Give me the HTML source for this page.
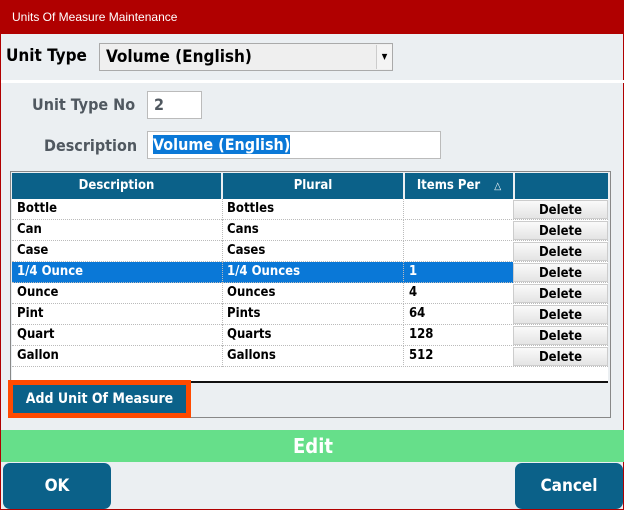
<!DOCTYPE html>
<html><head><style>
*{box-sizing:border-box;margin:0;padding:0}
body{width:624px;height:510px;background:#ebeff2;font-family:"DejaVu Sans Condensed","Liberation Sans",sans-serif;position:relative;overflow:hidden;border:1px solid #b00000}
.abs{position:absolute}
.title{left:0;top:0;width:624px;height:33px;background:#b00000;color:#fff;font-size:12px;line-height:33px;padding-left:11px;font-family:"Liberation Sans",sans-serif}
b,.b{font-weight:bold}
.lbl{font-size:16px;font-weight:bold;color:#505860}
.row{position:absolute;left:11px;width:596px;height:21px;font-size:13px;font-weight:bold;background:#fff;border-bottom:1px dotted #bbb}
.row span{position:absolute;top:2px}
.row .c1{left:5px}.row .c2{left:215px}.row .c3{left:397px}
.row .del{position:absolute;left:501px;top:1px;width:95px;height:19px;background:linear-gradient(#fafafa,#e4e4e4);border:1px solid #ccc;text-align:center;font-size:13px;line-height:19px;color:#000}
.sel{background:#0a78d7;color:#fff}
.sep{position:absolute;top:0;height:21px;border-left:1px dotted #bbb}
.hdr{position:absolute;top:172px;height:26px;background:#0b6189;color:#fff;font-size:13px;font-weight:bold;text-align:center;line-height:26px;border-right:2px solid #ebeff2}
.btn{background:#0b6189;color:#fff;font-weight:bold;font-size:17px;text-align:center;border-radius:7px}
</style></head><body>
<div class="abs title">Units Of Measure Maintenance</div>
<div class="abs b" style="left:5px;top:45px;font-size:17px;color:#000">Unit Type</div>
<div class="abs" style="left:98px;top:42px;width:294px;height:28px;background:#efefef;border:1px solid #aaa;font-size:17px;font-weight:bold;line-height:26px;padding-left:6px">Volume (English)</div>
<div class="abs" style="left:375px;top:44px;width:16px;height:24px;background:#f4f4f4;border-left:1px solid #ccc;font-size:8px;text-align:center;line-height:24px">▼</div>
<div class="abs" style="left:0;top:79px;width:624px;height:3px;background:#fff"></div>
<div class="abs lbl" style="left:31px;top:94px">Unit Type No</div>
<div class="abs" style="left:146px;top:90px;width:55px;height:28px;background:#fff;border:1px solid #bbb;font-size:16px;font-weight:bold;color:#505860;line-height:26px;padding-left:6px">2</div>
<div class="abs lbl" style="left:43px;top:135px">Description</div>
<div class="abs" style="left:146px;top:130px;width:294px;height:28px;background:#fff;border:1px solid #bbb;padding:3px 0 0 5px"><span style="background:#0a78d7;color:#fff;font-size:16px;font-weight:bold">Volume (English)</span></div>
<div class="abs" style="left:9px;top:170px;width:601px;height:247px;border:1px solid #888;background:#ebeff2"></div>
<div class="hdr" style="left:11px;width:211px">Description</div>
<div class="hdr" style="left:222px;width:182px">Plural</div>
<div class="hdr" style="left:404px;width:110px">Items Per <span style="font-size:10px;margin-left:10px">△</span></div>
<div class="hdr" style="left:514px;width:93px;border:0"></div>
<div class="row" style="top:198px"><span class="c1">Bottle</span><span class="c2">Bottles</span><div class="sep" style="left:210px"></div><div class="sep" style="left:391px"></div><div class="del">Delete</div></div>
<div class="row" style="top:219px"><span class="c1">Can</span><span class="c2">Cans</span><div class="sep" style="left:210px"></div><div class="sep" style="left:391px"></div><div class="del">Delete</div></div>
<div class="row" style="top:240px"><span class="c1">Case</span><span class="c2">Cases</span><div class="sep" style="left:210px"></div><div class="sep" style="left:391px"></div><div class="del">Delete</div></div>
<div class="row" style="top:261px;background:linear-gradient(90deg,#0a78d7 501px,#fff 501px);color:#fff"><span class="c1">1/4 Ounce</span><span class="c2">1/4 Ounces</span><span class="c3">1</span><div class="sep" style="left:210px"></div><div class="sep" style="left:391px"></div><div class="del">Delete</div></div>
<div class="row" style="top:282px"><span class="c1">Ounce</span><span class="c2">Ounces</span><span class="c3">4</span><div class="sep" style="left:210px"></div><div class="sep" style="left:391px"></div><div class="del">Delete</div></div>
<div class="row" style="top:303px"><span class="c1">Pint</span><span class="c2">Pints</span><span class="c3">64</span><div class="sep" style="left:210px"></div><div class="sep" style="left:391px"></div><div class="del">Delete</div></div>
<div class="row" style="top:324px"><span class="c1">Quart</span><span class="c2">Quarts</span><span class="c3">128</span><div class="sep" style="left:210px"></div><div class="sep" style="left:391px"></div><div class="del">Delete</div></div>
<div class="row" style="top:345px"><span class="c1">Gallon</span><span class="c2">Gallons</span><span class="c3">512</span><div class="sep" style="left:210px"></div><div class="sep" style="left:391px"></div><div class="del">Delete</div></div>
<div class="abs" style="left:11px;top:366px;width:596px;height:14px;background:#fff"></div>
<div class="abs" style="left:11px;top:380px;width:596px;height:2px;background:#111"></div>
<div class="abs" style="left:7px;top:379px;width:183px;height:38px;background:#ff4a00;padding:5px"><div style="background:#0b6189;color:#fff;height:100%;font-size:14px;font-weight:bold;text-align:center;line-height:28px">Add Unit Of Measure</div></div>
<div class="abs" style="left:0;top:429px;width:624px;height:32px;background:#66df8a;color:#fff;font-size:20px;font-weight:bold;text-align:center;line-height:32px">Edit</div>
<div class="abs btn" style="left:2px;top:462px;width:108px;height:46px;line-height:46px">OK</div>
<div class="abs btn" style="left:514px;top:462px;width:108px;height:46px;line-height:46px">Cancel</div>
</body></html>
